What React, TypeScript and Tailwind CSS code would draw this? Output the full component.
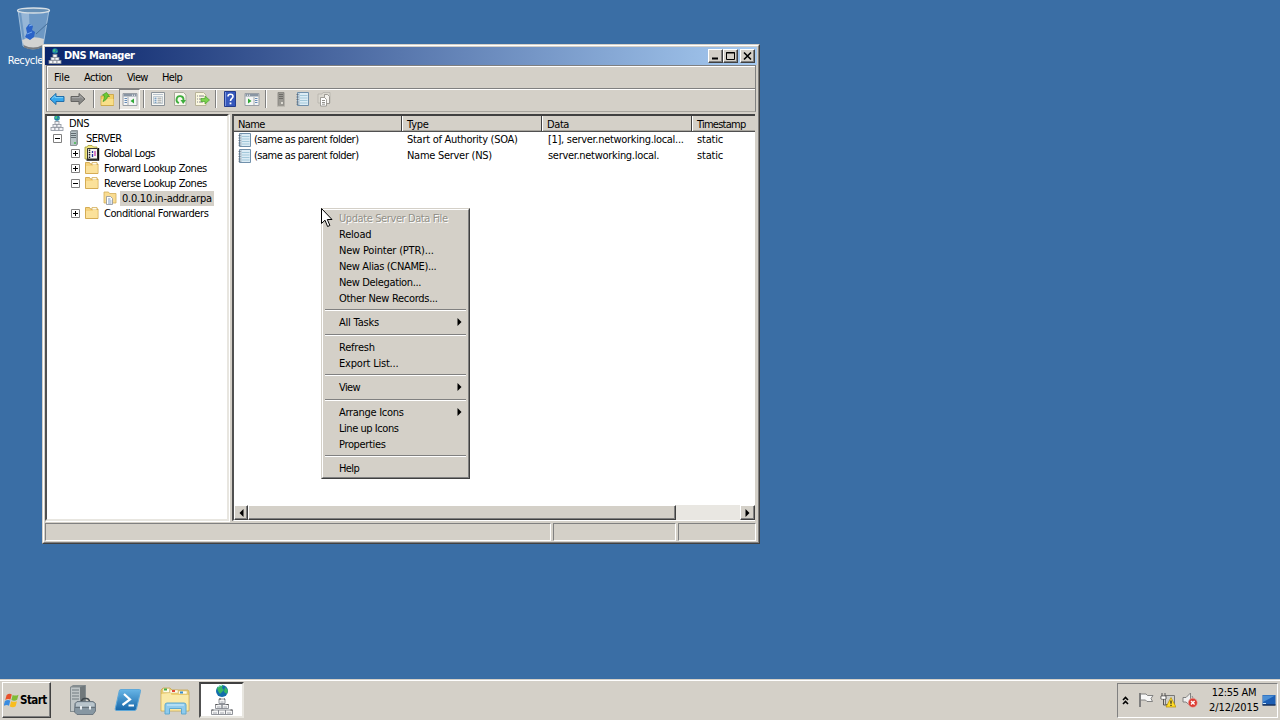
import type { ReactNode } from 'react';

type IconProps = { className?: string };

/* ---------- Icons ---------- */

function DnsIcon({ className = 'w-4 h-4' }: IconProps) {
    return (
        <svg viewBox="0 0 16 16" className={className}>
            <circle cx="8" cy="3" r="2.8" fill="#1f7fa8" />
            <path d="M6 2.2Q7.5.3 8.5 1.5L8 3.5 6.5 4zM9 3.5l1.5-.8-.4 2z" fill="#45c97a" />
            <path d="M8 6v2" stroke="#777" fill="none" />
            <g fill="#f3f4f7" stroke="#8b919b" strokeWidth=".8">
                <rect x="6" y="6.500" width="4" height="2.800" />
                <rect x="4" y="9.400" width="4" height="2.800" />
                <rect x="8" y="9.400" width="4" height="2.800" />
                <rect x="2" y="12.400" width="4" height="3.100" />
                <rect x="6" y="12.400" width="4" height="3.100" />
                <rect x="10" y="12.400" width="4" height="3.100" />
            </g>
        </svg>
    );
}

function ServerIcon({ className = 'w-4 h-4' }: IconProps) {
    return (
        <svg viewBox="0 0 16 16" className={className}>
            <path d="M4.500 1.500l1-1h6v13.500l-1 1.500h-6z" fill="#9ba7ab" stroke="#7c8588" strokeWidth=".8" />
            <path d="M5 2h5v13H5z" fill="#b9c5c8" />
            <path d="M5 3.500h5M5 5.500h5M5 7.500h5" stroke="#5f6b70" />
            <path d="M8 12h2v2H8z" fill="#5fbf6a" />
        </svg>
    );
}

function GrayServerIcon() {
    return (
        <svg viewBox="0 0 16 16" className="w-4 h-4">
            <path d="M5 1.500h6v13H5z" fill="#9b9993" stroke="#84827c" strokeWidth=".8" />
            <path d="M6 3.500h4M6 5.500h4M6 7.500h4" stroke="#6e6c68" />
            <path d="M8 11h2v2H8z" fill="#dedbd3" />
            <path d="M4 15h8" stroke="#aaa79f" />
        </svg>
    );
}

function FolderIcon() {
    return (
        <svg viewBox="0 0 16 16" className="w-4 h-4">
            <path d="M1.500 13.500v-11h4l1 1.500h7.500v9.500z" fill="#f5d27c" stroke="#d0a548" strokeWidth=".9" />
            <path d="M8 2.500h5V5H8z" fill="#fffbe8" stroke="#d0a548" strokeWidth=".7" />
            <path d="M2 6h6l1-1h4.600v8H2z" fill="#fbe19a" />
        </svg>
    );
}

function ZoneIcon() {
    return (
        <svg viewBox="0 0 16 16" className="w-4 h-4">
            <path d="M2 13V2h4.500l1 1.500H14V13z" fill="#f9dc92" stroke="#d3ad58" strokeWidth=".8" />
            <path d="M4.500 6.500h4l2 2v6h-6z" fill="#fff" stroke="#8a9199" strokeWidth=".8" />
            <path d="M6 9h2.500M6 11h3.500M6 13h3.500" stroke="#5e83b5" strokeWidth=".8" />
        </svg>
    );
}

function LogsIcon() {
    return (
        <svg viewBox="0 0 16 16" className="w-4 h-4">
            <path d="M1 14V2h2l1-1.500h4L9.500 2H13v12z" fill="#f1e680" stroke="#a39a35" strokeWidth=".8" />
            <path d="M3.500 3.500h10V14h-10z" fill="#f6f6ee" stroke="#333" />
            <path d="M5.500 4.500v9" stroke="#222" strokeWidth="1.500" strokeDasharray="1.500 .8" />
            <path d="M8.500 6v2M8.500 9v3" stroke="#26309e" strokeWidth="1.300" />
            <path d="M11 6v5" stroke="#c53db0" strokeWidth="1.300" />
            <path d="M14.500 3v12H2.500" stroke="#111" strokeWidth="1.400" fill="none" />
        </svg>
    );
}

function RecordIcon() {
    return (
        <svg viewBox="0 0 16 16" className="w-4 h-4">
            <path d="M2.500 1.500h11v13h-11z" fill="#dcecf5" stroke="#7190ab" />
            <path d="M5 4.500h7.500M5 7h7.500M5 9.500h7.500M5 12h7.500" stroke="#a3c8da" />
            <path d="M4 2v12" stroke="#a6b8c6" />
            <path d="M1.500 3.500h2M1.500 6h2M1.500 8.500h2M1.500 11h2M1.500 13.200h2" stroke="#606b78" strokeWidth=".9" />
        </svg>
    );
}

function ArrowIcon({ forward }: { forward?: boolean }) {
    return (
        <svg viewBox="0 0 16 16" className={forward ? 'w-4 h-4 -scale-x-100' : 'w-4 h-4'}>
            <path
                d="M1 8l6-5.500v3h8v5H7v3z"
                fill={forward ? '#8a8a88' : '#37a8ed'}
                stroke={forward ? '#646462' : '#236ea9'}
                strokeLinejoin="round"
            />
            <path d="M3 7.500l3-2.700v1.800h8" stroke={forward ? '#aaa' : '#7ed0f8'} fill="none" />
        </svg>
    );
}

function UpFolderIcon() {
    return (
        <svg viewBox="0 0 16 16" className="w-4 h-4">
            <path d="M2 14.500V5h4l1-1.500h7.500v11z" fill="#f2cf66" stroke="#c89f3b" strokeWidth=".8" />
            <path d="M2.500 8h12v6h-12z" fill="#f9df89" />
            <path d="M4 10.500C6.500 9.500 8.500 7.500 8.500 5.500h2L7.500 1.500 3.500 4l2 .8C5.500 7 5 8.500 4 10.500z" fill="#6ccc35" stroke="#3e981f" strokeWidth=".7" />
        </svg>
    );
}

function PaneIcon({ flip }: { flip?: boolean }) {
    return (
        <svg viewBox="0 0 16 16" className={flip ? 'w-4 h-4 -scale-x-100' : 'w-4 h-4'}>
            <path d="M1 2.500h14v12H1z" fill="#f4f5f5" stroke="#9a9fa5" />
            <path d="M1.500 3h13v2.500h-13z" fill="#8995a3" />
            <path d="M10 4.200h1M12 4.200h1" stroke="#fff" />
            <path d="M6 6v8" stroke="#a5abb0" />
            <path d="M2.500 7.500H5M2.500 9.500H5M2.500 11.500H5" stroke="#668bb8" />
            <path d="M12 7.500v5L8.500 10z" fill="#31a936" />
        </svg>
    );
}

function PropertiesIcon() {
    return (
        <svg viewBox="0 0 16 16" className="w-4 h-4">
            <path d="M1.500 1.500h13v13h-13z" fill="#f7f7f4" stroke="#8b9298" />
            <path d="M3 3.500h10" stroke="#b8c3cd" />
            <path d="M3.500 5.500h9v7h-9z" fill="none" stroke="#a9b7c2" strokeWidth=".7" />
            <path d="M4.500 7.200h2M4.500 9.200h2M4.500 11.200h2" stroke="#4379ad" />
            <path d="M7.500 7.200h4M7.500 9.200h4M7.500 11.200h4" stroke="#9a9f9f" />
        </svg>
    );
}

function RefreshIcon() {
    return (
        <svg viewBox="0 0 16 16" className="w-4 h-4">
            <path d="M2.500 1.500h9l2.500 2.500v10.500H2.500z" fill="#f8f8ee" stroke="#aaa99d" />
            <path d="M7 12A3.500 3.500 0 1 1 11.500 9" fill="none" stroke="#3fae3d" strokeWidth="1.800" />
            <path d="M8.500 9h5.500L11.200 13z" fill="#3fae3d" />
        </svg>
    );
}

function ExportIcon() {
    return (
        <svg viewBox="0 0 16 16" className="w-4 h-4">
            <path d="M1.500 1.500h8L12 4v10.500H1.500z" fill="#fbf8df" stroke="#b8b399" />
            <path d="M3 5h1M5 5h5M3 8h1M5 8h3M3 11h1M5 11h4" stroke="#778" strokeWidth=".9" />
            <path d="M7 7.500h4V5l4.500 4-4.500 4v-2.500H7z" fill="#7bd34f" stroke="#4aa42c" strokeWidth=".7" />
        </svg>
    );
}

function HelpIcon() {
    return (
        <svg viewBox="0 0 16 16" className="w-4 h-4">
            <path d="M2.500.5h11v15h-11z" fill="#3658bd" stroke="#243c8b" />
            <path d="M3.500 1v14" stroke="#7893df" />
            <path d="M6 5.500C6 2.500 11 2.500 11 5.500c0 2-2.500 2-2.500 4.500" fill="none" stroke="#fff" strokeWidth="1.600" />
            <path d="M7.600 11.500h1.800v1.800H7.600z" fill="#fff" />
        </svg>
    );
}

function NewZoneIcon() {
    return (
        <svg viewBox="0 0 16 16" className="w-4 h-4">
            <path d="M2 12V3h4l1-1.500h7V12z" fill="#dad7cf" stroke="#b5b2ab" strokeWidth=".8" />
            <path d="M8.500 3.500h3l2 2v7h-5z" fill="#f4f2ee" stroke="#8b8983" strokeWidth=".8" />
            <path d="M4.500 6.500h4l2 2v6.500h-6z" fill="#fff" stroke="#8b8983" strokeWidth=".8" />
            <path d="M6 9.500h3M6 11.500h3M6 13.200h3" stroke="#77756f" strokeWidth=".8" />
        </svg>
    );
}

function RecycleBin() {
    return (
        <svg viewBox="0 0 36 44" className="w-9 h-11">
            <path d="M2 3l5 36q10 6 20 0l6-36z" fill="#8fb4d8" fillOpacity=".6" stroke="#b4cde3" strokeWidth=".8" />
            <path d="M5 5h8l1 30-5-1z" fill="#c8dcef" fillOpacity=".45" />
            <path d="M6 33q11-5 22-1l-1 7q-10 5-19 0z" fill="#d3d3d1" />
            <path d="M7.500 38q10 5 19 0l-.5 2.500q-9 4-18 0z" fill="#777b80" />
            <path d="M10 21l3-4 4 2-1 4 3 2-1 5-4 3-5-3 2-4z" fill="#2a63c8" />
            <path d="M13 19l3-1M11 27l5-2" stroke="#75aaf0" />
            <path d="M20 27L32 16" stroke="#456f9a" />
            <ellipse cx="17.500" cy="3.500" rx="16" ry="2.500" fill="#668fb5" stroke="#d7dfe5" strokeWidth="1.300" />
        </svg>
    );
}

function WindowsFlag() {
    return (
        <svg viewBox="0 0 16 16" className="w-[15px] h-[15px]">
            <path d="M2.800 2q3-2 5.500-.5L6.900 7Q4 5.700 1.300 7.500z" fill="#e8512b" />
            <path d="M9.200 2q3 1.500 6.300-.2L14 7.300q-3 1.700-6.100.2z" fill="#7fbb35" />
            <path d="M1 8.500q3-1.800 5.700-.4L5.300 13.500Q2.800 12-.4 13.800z" fill="#3a8ce0" />
            <path d="M7.600 8.700q3 1.400 6.200 0L12.400 14.200q-3 1.800-6.200.1z" fill="#f8bd20" />
        </svg>
    );
}

function ServerManagerIcon() {
    return (
        <svg viewBox="0 0 28 32" className="w-7 h-8">
            <path d="M1 3l3-2h13v25l-4 2H1z" fill="#858d90" />
            <path d="M2 3.500h9V27H2z" fill="#bfc5c6" />
            <path d="M3 6h7M3 9h7M3 12h7M3 15h7" stroke="#737c80" strokeWidth="1.200" />
            <path d="M11 3l5-1.500V24h-5z" fill="#70787b" />
            <path d="M12 18.500q1-4 3.500-4h2q2.500 0 3.500 4" fill="none" stroke="#3f474c" strokeWidth="1.300" />
            <path d="M6 19.500l2-2h16l2.500 2v7.500L24 30.500H8L5.500 28z" fill="#8797a2" stroke="#65727c" strokeWidth=".9" />
            <path d="M7 19.500l1.500-1.200h15l2 1.200v3H7z" fill="#b9c5cc" />
            <path d="M6 23.500h20" stroke="#66727b" />
            <path d="M11 22h2v3.500h-2zM20 22h2v3.500h-2z" fill="#e6ebee" />
        </svg>
    );
}

function PowerShellIcon() {
    return (
        <svg viewBox="0 0 28 24" className="w-7 h-6">
            <defs>
                <linearGradient id="ps" x1="0" y1="0" x2="0" y2="1">
                    <stop stopColor="#67b5e6" />
                    <stop offset="1" stopColor="#1766a8" />
                </linearGradient>
            </defs>
            <path d="M6.500 1.500h19q1.500 0 1 1.700l-4 17.600q-.4 1.700-2 1.700h-18q-1.700 0-1.300-1.700l4-17.600q.3-1.700 1.300-1.700z" fill="url(#ps)" stroke="#5fa8d8" />
            <path d="M10 6l6 5.500L8.500 17" fill="none" stroke="#fff" strokeWidth="2.200" />
            <path d="M14.500 17.500H20" stroke="#fff" strokeWidth="2" />
        </svg>
    );
}

function ExplorerIcon() {
    return (
        <svg viewBox="0 0 32 30" className="w-8 h-[30px]">
            <path d="M2 26V5l2-2h7l2 2h16l1 2v19z" fill="#efcf72" stroke="#c7a64e" strokeWidth=".8" />
            <path d="M4 3.500h6.500v4H4zM11 5h8v3h-8zM19.500 6H28v3h-8.500z" fill="#fffbe9" stroke="#ceb66e" strokeWidth=".5" />
            <path d="M5 3.500h3v2H5z" fill="#45ad45" />
            <path d="M13 5h3v2h-3z" fill="#e34935" />
            <path d="M21 6.500h3v2h-3z" fill="#378ccc" />
            <path d="M2.500 9l9-1 1 2h17v15.500h-27z" fill="#fae9a8" />
            <path d="M6 29V20q0-2 2-2h17q2 0 2 2v9h-4.500v-5.500h-12V29z" fill="#8fcbed" stroke="#5fa9d0" />
            <path d="M8 20h17" stroke="#d4f0fd" />
        </svg>
    );
}

function DnsLargeIcon() {
    return (
        <svg viewBox="0 0 24 32" className="w-6 h-8">
            <circle cx="12" cy="7" r="6" fill="#126dac" />
            <path d="M7 4q3-4 6-3l-1 3 2 2-4 4-2-3zM15 3l3 3-1 4-3-2z" fill="#37b764" />
            <path d="M8 3q2-2 4-1.500" stroke="#b0ecef" fill="none" />
            <g fill="#f5f5f5" stroke="#85888e" strokeWidth=".9">
                <path d="M9 15h6v4.500H9zM5.500 20.500h6.500v4H5.500zM12 20.500h6.500v4H12zM1.500 26h7v4.500h-7zM8.500 26h7v4.500h-7zM15.500 26h7v4.500h-7z" />
            </g>
            <path d="M9 15h2M14 15h1M5.500 20.500h2M16.500 20.500h2M1.500 26h2M20.500 26h2" stroke="#555" />
            <path d="M10.500 18h3M7 23h3.500M13.500 23H17M3 29h4M10 29h4M17 29h4" stroke="#a4a8b0" />
        </svg>
    );
}

function FlagIcon() {
    return (
        <svg viewBox="0 0 16 16" className="w-4 h-4">
            <path d="M2 1v14" stroke="#777" strokeWidth="1.800" />
            <path d="M2.500 2h5.500L9.500 3.500H15l-2 3 1.500 3H9L7.500 8h-5z" fill="#f8f8f8" stroke="#777" strokeWidth=".9" />
        </svg>
    );
}

function NetworkIcon() {
    return (
        <svg viewBox="0 0 16 16" className="w-4 h-4">
            <path d="M5.500 3.500h9v9h-9z" fill="#cfcfcb" stroke="#777" />
            <path d="M2 1v3M5 1v3M1 4h5v3H1zM3.500 7v6H8" fill="none" stroke="#555" />
            <path d="M1.500 4.500h4v2.300h-4z" fill="#fff" />
            <path d="M11 5.500l5 9.500H6z" fill="#ffdc29" stroke="#b58c00" strokeWidth=".7" />
            <path d="M11 8.500v3.200M11 12.700V14" stroke="#222" strokeWidth="1.200" />
        </svg>
    );
}

function VolumeIcon() {
    return (
        <svg viewBox="0 0 16 16" className="w-4 h-4">
            <path d="M1 5.500h3L8.500 1v13L4 10H1z" fill="#efefef" stroke="#777" strokeWidth=".9" />
            <path d="M10 4q1.500 2 1 4" stroke="#888" fill="none" />
            <circle cx="10.800" cy="10.800" r="4.500" fill="#dc3b32" stroke="#e8aaa2" strokeWidth=".6" />
            <path d="M9 9l3.600 3.600M12.600 9L9 12.600" stroke="#fff" strokeWidth="1.400" />
        </svg>
    );
}

function DisplayIcon() {
    return (
        <svg viewBox="0 0 14 13" className="w-3.5 h-[13px]">
            <path d="M.5 1h13v10H.5z" fill="#1c5eb4" />
            <path d="M1 1.500h12L1 8z" fill="#4c8fd5" />
            <path d="M.5 11h13" stroke="#16315d" strokeWidth="1.500" />
            <path d="M1 9.500h3" stroke="#c8e1f5" />
        </svg>
    );
}

/* ---------- Tree ---------- */

type TreeItem = {
    label: string;
    tracking?: string;
    icon: ReactNode;
    indent: string;
    sign?: '+' | '-';
    selected?: boolean;
};

const tree: TreeItem[] = [
    { label: 'DNS', tracking: 'tracking-[-0.4px]', icon: <DnsIcon />, indent: 'pl-[2px]' },
    { label: 'SERVER', tracking: 'tracking-[-0.5px]', icon: <ServerIcon />, indent: 'pl-[6px]', sign: '-' },
    { label: 'Global Logs', tracking: 'tracking-[-0.6px]', icon: <LogsIcon />, indent: 'pl-[24px]', sign: '+' },
    { label: 'Forward Lookup Zones', tracking: 'tracking-[-0.45px]', icon: <FolderIcon />, indent: 'pl-[24px]', sign: '+' },
    { label: 'Reverse Lookup Zones', tracking: 'tracking-[-0.45px]', icon: <FolderIcon />, indent: 'pl-[24px]', sign: '-' },
    { label: '0.0.10.in-addr.arpa', tracking: 'tracking-[-0.25px]', icon: <ZoneIcon />, indent: 'pl-[55px]', selected: true },
    { label: 'Conditional Forwarders', tracking: 'tracking-[-0.45px]', icon: <FolderIcon />, indent: 'pl-[24px]', sign: '+' },
];

function TreeRow({ item }: { item: TreeItem }) {
    return (
        <div className={`flex items-center h-[15px] whitespace-nowrap ${item.indent}`}>
            {item.sign && (
                <svg viewBox="0 0 9 9" className="w-[9px] h-[9px] mr-[4px] shrink-0">
                    <path d="M.5.5h8v8h-8z" fill="#fff" stroke="#808080" />
                    <path d={item.sign === '+' ? 'M2 4.500h5M4.500 2v5' : 'M2 4.500h5'} stroke="#000" />
                </svg>
            )}
            {item.icon}
            <span className={`ml-[2px] px-[2px] h-[15px] leading-[15px] ${item.selected ? 'bg-[#d4d0c8]' : ''} ${item.tracking ?? ''}`}>
                {item.label}
            </span>
        </div>
    );
}

/* ---------- Context menu ---------- */

type MenuEntry = { label?: string; tracking?: string; disabled?: boolean; sub?: boolean; gap?: string };

const contextMenu: MenuEntry[] = [
    { label: 'Update Server Data File', tracking: 'tracking-[-0.4px]', disabled: true },
    { label: 'Reload' },
    { label: 'New Pointer (PTR)...' },
    { label: 'New Alias (CNAME)...', tracking: 'tracking-[-0.35px]' },
    { label: 'New Delegation...', tracking: 'tracking-[-0.35px]' },
    { label: 'Other New Records...', tracking: 'tracking-[-0.3px]' },
    { gap: 'h-[8px]' },
    { label: 'All Tasks', sub: true },
    { gap: 'h-[9px]' },
    { label: 'Refresh' },
    { label: 'Export List...' },
    { gap: 'h-[8px]' },
    { label: 'View', tracking: 'tracking-[-0.6px]', sub: true },
    { gap: 'h-[9px]' },
    { label: 'Arrange Icons', tracking: 'tracking-[-0.3px]', sub: true },
    { label: 'Line up Icons', tracking: 'tracking-[-0.45px]' },
    { label: 'Properties', tracking: 'tracking-[-0.35px]' },
    { gap: 'h-[8px]' },
    { label: 'Help', tracking: 'tracking-[-0.6px]' },
];

function ContextMenu() {
    return (
        <div className="absolute left-[321px] top-[208px] w-[149px] h-[271px] bg-[#d4d0c8] border border-t-[#d4d0c8] border-l-[#d4d0c8] border-b-[#404040] border-r-[#404040]">
            <div className="h-full border border-t-white border-l-white border-b-[#808080] border-r-[#808080]">
                {contextMenu.map((entry, i) =>
                    entry.gap ? (
                        <div key={i} className={`flex items-center px-[2px] ${entry.gap}`}>
                            <div className="w-full h-[2px] border-t border-t-[#808080] border-b border-b-white" />
                        </div>
                    ) : (
                        <div
                            key={i}
                            className={`flex items-center justify-between h-4 pl-[16px] pr-[6px] leading-4 ${entry.disabled ? 'text-[#929088] [text-shadow:1px_1px_0_white]' : ''}`}
                        >
                            <span className={`pt-[2px] ${entry.tracking ?? ''}`}>{entry.label}</span>
                            {entry.sub && (
                                <svg viewBox="0 0 5 8" className="w-[5px] h-2">
                                    <path d="M.5 0v8l4-4z" />
                                </svg>
                            )}
                        </div>
                    )
                )}
            </div>
        </div>
    );
}

/* ---------- Window pieces ---------- */

const raised = 'bg-[#d4d0c8] border border-t-white border-l-white border-b-[#404040] border-r-[#404040] shadow-[inset_-1px_-1px_0_#808080]';

function Caption({ children, className = '' }: { children: ReactNode; className?: string }) {
    return (
        <button className={`w-[15px] h-[14px] flex items-center justify-center ${raised} ${className}`}>
            <svg viewBox="0 0 11 10" className="w-[11px] h-[10px] shrink-0" fill="none" stroke="#000">
                {children}
            </svg>
        </button>
    );
}

function Divider({ className = '' }: { className?: string }) {
    return <div className={`w-[2px] h-[18px] border-l border-l-[#808080] border-r border-r-white shrink-0 ${className}`} />;
}

const records = [
    { type: 'Start of Authority (SOA)', data: '[1], server.networking.local...' },
    { type: 'Name Server (NS)', data: 'server.networking.local.' },
];

function Toolbar() {
    return (
        <div className="flex items-center h-[24px] pl-[2px] pb-px border border-t-[#808080] border-l-[#808080] border-r-[#808080] border-b-[#a8a59e] shadow-[inset_1px_1px_0_white]">
            <ArrowIcon />
            <div className="ml-[5px] flex"><ArrowIcon forward /></div>
            <Divider className="ml-[7px]" />
            <div className="ml-[4px] flex"><UpFolderIcon /></div>
            <div className="ml-[4px] w-[21px] h-[21px] flex items-center justify-center bg-[#eae8e4] border border-t-[#808080] border-l-[#808080] border-b-white border-r-white">
                <PaneIcon />
            </div>
            <Divider className="ml-[3px]" />
            <div className="ml-[5px] flex gap-[6px]">
                <PropertiesIcon />
                <RefreshIcon />
                <ExportIcon />
            </div>
            <Divider className="ml-[5px]" />
            <div className="ml-[5px] flex gap-[6px]">
                <HelpIcon />
                <PaneIcon flip />
            </div>
            <Divider className="ml-[5px]" />
            <div className="ml-[6px] flex gap-[6px]">
                <GrayServerIcon />
                <RecordIcon />
                <div className="-ml-px flex"><NewZoneIcon /></div>
            </div>
        </div>
    );
}

function DnsWindow() {
    return (
        <div className="absolute left-[42px] top-[44px] w-[718px] h-[500px] bg-[#d4d0c8] border border-t-[#d4d0c8] border-l-[#d4d0c8] border-b-[#404040] border-r-[#404040]">
            <div className="h-full p-px flex flex-col border border-t-white border-l-white border-b-[#808080] border-r-[#808080]">
                {/* Title bar */}
                <div className="flex items-center h-[18px] pl-[2px] pr-[2px] bg-linear-to-r/srgb from-[#0a246a] to-[#a6caf0]">
                    <DnsIcon />
                    <span className="ml-[1px] font-bold text-white tracking-[-0.5px]">DNS Manager</span>
                    <div className="ml-auto flex">
                        <Caption><path d="M2 7.500h6" strokeWidth="2" /></Caption>
                        <Caption><path d="M1.500 1.500h8v7h-8zM1 2h9" /></Caption>
                        <Caption className="ml-[2px]"><path d="M2 1.500l7 7M9 1.500l-7 7" strokeWidth="1.600" /></Caption>
                    </div>
                </div>

                {/* Menu bar */}
                <div className="flex items-center h-[23px] pl-[7px] pt-px mx-px border border-b-0 border-[#808080] shadow-[inset_1px_1px_0_white]">
                    <span className="w-[30px]">File</span>
                    <span className="w-[43px] tracking-[-0.5px]">Action</span>
                    <span className="w-[35px] tracking-[-0.7px]">View</span>
                    <span className="tracking-[-0.6px]">Help</span>
                </div>
                <div className="mx-px"><Toolbar /></div>

                {/* Panes */}
                <div className="mt-[2px] flex h-[408px]">
                    <div className="w-[184px] bg-white border-2 border-t-[#404040] border-l-[#505050] border-b-[#e8e6e0] border-r-[#e8e6e0] shadow-[1px_1px_0_white] overflow-hidden">
                        {tree.map((item) => (
                            <TreeRow key={item.label} item={item} />
                        ))}
                    </div>
                    <div className="ml-[3px] flex-1 mr-[2px] flex flex-col bg-white border-t-2 border-l-2 border-t-[#404040] border-l-[#505050] border-b border-b-white overflow-hidden">
                        <div className="flex h-[16px] shrink-0 bg-[#d4d0c8] border-b border-b-[#505050] leading-[17px] shadow-[inset_0_-1px_0_#a8a59e]">
                            <div className="w-[168px] pl-[4px] border-r border-r-[#404040] tracking-[-0.6px]">Name</div>
                            <div className="w-[140px] pl-[4px] border-l border-l-white border-r border-r-[#404040]">Type</div>
                            <div className="w-[150px] pl-[4px] border-l border-l-white border-r border-r-[#404040] tracking-[-0.4px]">Data</div>
                            <div className="flex-1 pl-[4px] border-l border-l-white tracking-[-0.8px]"><span className="tracking-[-0.75px]">Timestamp</span></div>
                        </div>
                        {records.map((record) => (
                            <div key={record.type} className="flex items-center h-4 shrink-0 pl-[3px]">
                                <RecordIcon />
                                <span className="w-[154px] tracking-[-0.52px] pl-px">(same as parent folder)</span>
                                <span className="w-[141px] whitespace-nowrap tracking-[-0.28px]">{record.type}</span>
                                <span className="w-[149px] whitespace-nowrap tracking-[-0.3px]">{record.data}</span>
                                <span>static</span>
                            </div>
                        ))}
                        {/* Horizontal scroll bar */}
                        <div className="mt-auto flex h-[15px] shrink-0 bg-[#e9e7e2]">
                            <div className={`w-[14px] flex items-center justify-center ${raised}`}>
                                <svg viewBox="0 0 5 8" className="w-[5px] h-2"><path d="M4.500 0v8l-4-4z" /></svg>
                            </div>
                            <div className={`w-[428px] ${raised}`} />
                            <div className={`ml-auto w-[15px] flex items-center justify-center ${raised}`}>
                                <svg viewBox="0 0 5 8" className="w-[5px] h-2"><path d="M.5 0v8l4-4z" /></svg>
                            </div>
                        </div>
                    </div>
                </div>

                {/* Status bar */}
                <div className="mt-[2px] flex gap-[2px] h-[18px] pr-px">
                    <div className="w-[506px] border border-t-[#808080] border-l-[#808080] border-b-white border-r-white" />
                    <div className="w-[123px] border border-t-[#808080] border-l-[#808080] border-b-white border-r-white" />
                    <div className="flex-1 border border-t-[#808080] border-l-[#808080] border-b-white border-r-white" />
                </div>
            </div>
        </div>
    );
}

function Taskbar() {
    return (
        <div className="h-[41px] shrink-0 flex items-center bg-[#d4d0c8] border-t border-t-[#d4d0c8] shadow-[inset_0_1px_0_white] pl-[2px] pr-[2px]">
            <button className={`w-[49px] h-[36px] flex items-center pl-px ${raised}`}>
                <WindowsFlag />
                <span className="font-bold text-[11.500px] tracking-[-0.55px] ml-px">Start</span>
            </button>
            <div className="ml-[18px] flex"><ServerManagerIcon /></div>
            <div className="ml-[17px] flex"><PowerShellIcon /></div>
            <div className="ml-[17px] flex"><ExplorerIcon /></div>
            <div className="ml-[8px] w-[45px] h-[36px] flex items-center justify-center bg-white border-2 border-t-[#404040] border-l-[#505050] border-b-[#e8e6e0] border-r-[#e8e6e0]">
                <DnsLargeIcon />
            </div>
            <div className="ml-auto w-[161px] h-[35px] flex items-center border border-t-[#808080] border-l-[#808080] border-b-white border-r-white">
                <svg viewBox="0 0 7 9" className="w-[7px] h-[9px] ml-[4px]" fill="none" stroke="#000" strokeWidth="1.600">
                    <path d="M1 4l2.500-2.500L6 4M1 8l2.500-2.500L6 8" />
                </svg>
                <div className="ml-[9px] flex gap-[6px]">
                    <FlagIcon />
                    <NetworkIcon />
                    <VolumeIcon />
                </div>
                <div className="ml-auto w-[50px] flex flex-col items-center leading-[15px] text-[11px] whitespace-nowrap">
                    <span className="tracking-[-0.3px]">12:55 AM</span>
                    <span className="tracking-[-0.1px]">2/12/2015</span>
                </div>
                <div className="ml-[3px] mr-[1px] flex"><DisplayIcon /></div>
            </div>
        </div>
    );
}

export default function App() {
    return (
        <div className="w-[1280px] h-[720px] overflow-hidden relative flex flex-col bg-[#3a6ea5] text-[11px] leading-[15px] text-black font-['DejaVu_Sans_Condensed','DejaVu_Sans',sans-serif] [font-stretch:condensed] tracking-[-0.2px]">
            <div className="flex-1">
                <div className="w-[68px] pt-[7px] flex flex-col items-center text-white whitespace-nowrap">
                    <RecycleBin />
                    <span className="mt-[2px] tracking-[-0.4px]">Recycle Bin</span>
                </div>
            </div>
            <Taskbar />
            <DnsWindow />
            <ContextMenu />
            <svg viewBox="0 0 12 20" className="absolute left-[321px] top-[208px] w-3 h-5">
                <path d="M.5.5v15l3.500-3.300 2.600 6.300 2.300-1-2.600-6h4.700z" fill="#fff" stroke="#000" />
            </svg>
        </div>
    );
}
